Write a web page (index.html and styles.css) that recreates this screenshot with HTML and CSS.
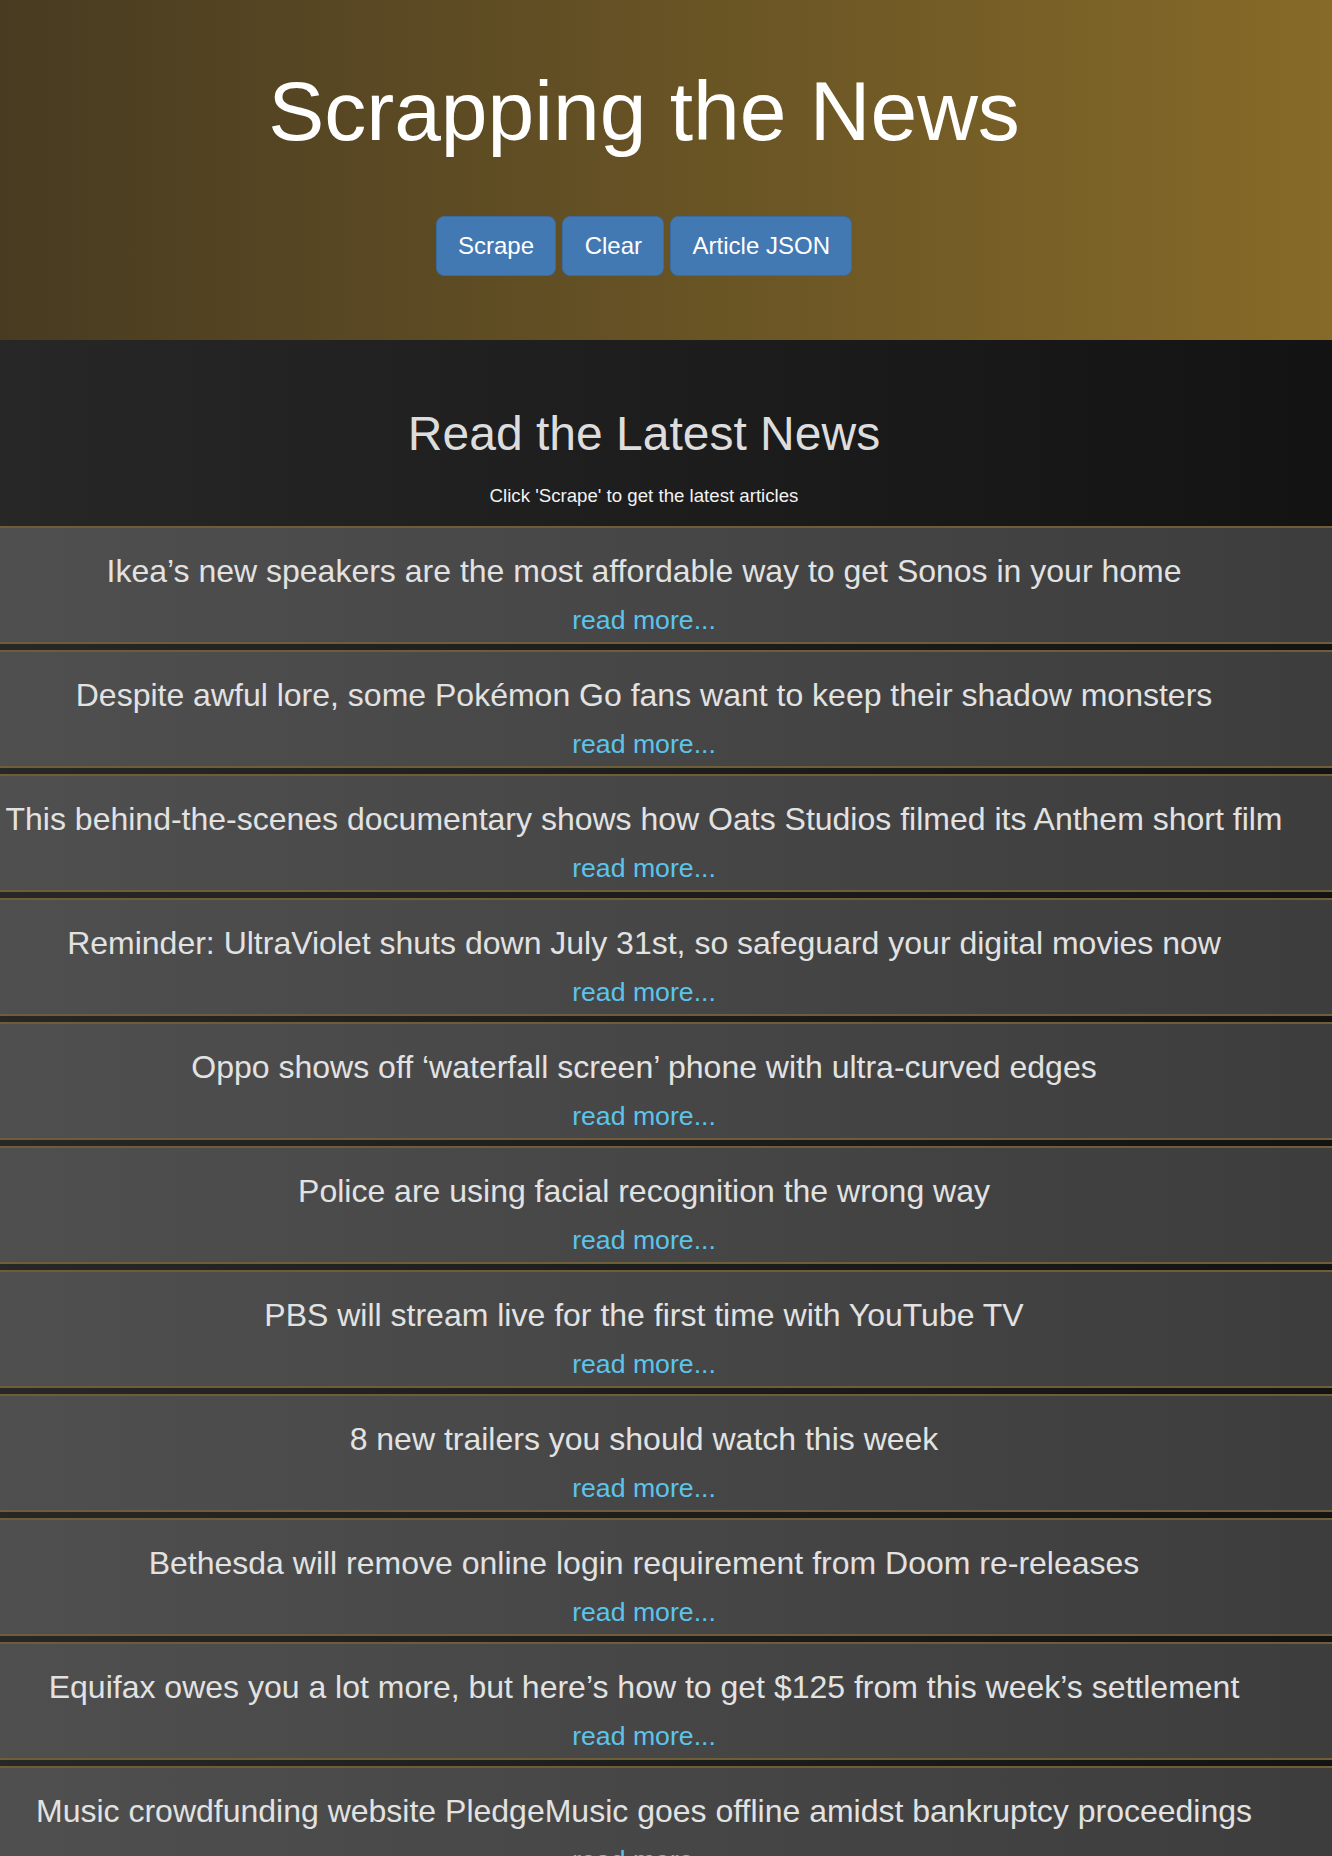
FILE: index.html
```html
<!DOCTYPE html>
<html lang="en">
<head>
<meta charset="utf-8">
<title>Scrapping the News</title>
<link rel="stylesheet" href="styles.css">
</head>
<body>
<header class="hero">
  <h1 class="hero-title">Scrapping the News</h1>
  <div class="actions">
    <button class="btn">Scrape</button>
    <button class="btn">Clear</button>
    <button class="btn">Article JSON</button>
  </div>
</header>
<main class="main">
  <section class="intro">
    <h2 class="intro-title">Read the Latest News</h2>
    <p class="intro-text">Click 'Scrape' to get the latest articles</p>
  </section>
  <div class="articles">
    <article class="article"><h3 class="article-title">Ikea’s new speakers are the most affordable way to get Sonos in your home</h3><a class="read-more" href="#">read more...</a></article>
    <article class="article"><h3 class="article-title">Despite awful lore, some Pokémon Go fans want to keep their shadow monsters</h3><a class="read-more" href="#">read more...</a></article>
    <article class="article"><h3 class="article-title">This behind-the-scenes documentary shows how Oats Studios filmed its Anthem short film</h3><a class="read-more" href="#">read more...</a></article>
    <article class="article"><h3 class="article-title">Reminder: UltraViolet shuts down July 31st, so safeguard your digital movies now</h3><a class="read-more" href="#">read more...</a></article>
    <article class="article"><h3 class="article-title">Oppo shows off ‘waterfall screen’ phone with ultra-curved edges</h3><a class="read-more" href="#">read more...</a></article>
    <article class="article"><h3 class="article-title">Police are using facial recognition the wrong way</h3><a class="read-more" href="#">read more...</a></article>
    <article class="article"><h3 class="article-title">PBS will stream live for the first time with YouTube TV</h3><a class="read-more" href="#">read more...</a></article>
    <article class="article"><h3 class="article-title">8 new trailers you should watch this week</h3><a class="read-more" href="#">read more...</a></article>
    <article class="article"><h3 class="article-title">Bethesda will remove online login requirement from Doom re-releases</h3><a class="read-more" href="#">read more...</a></article>
    <article class="article"><h3 class="article-title">Equifax owes you a lot more, but here’s how to get $125 from this week’s settlement</h3><a class="read-more" href="#">read more...</a></article>
    <article class="article"><h3 class="article-title">Music crowdfunding website PledgeMusic goes offline amidst bankruptcy proceedings</h3><a class="read-more" href="#">read more...</a></article>
  </div>
</main>
</body>
</html>
```
FILE: styles.css
```css
* { box-sizing: border-box; }

html, body {
  margin: 0;
  padding: 0;
}

body {
  font-family: "Liberation Sans", Arial, Helvetica, sans-serif;
  background: linear-gradient(to right, #272727, #131313);
  color: #e0e0e0;
}

.hero {
  height: 340px;
  padding: 65px 44px 0 0;
  background: linear-gradient(to right, #483b21, #866a28);
  text-align: center;
}

.hero-title {
  margin: 0;
  font-size: 84px;
  line-height: 92px;
  font-weight: 400;
  color: #ffffff;
}

.actions {
  margin-top: 59px;
  display: flex;
  justify-content: center;
  gap: 6px;
}

.btn {
  font-family: "Liberation Sans", Arial, Helvetica, sans-serif;
  font-size: 24px;
  line-height: 32px;
  padding: 13px 21.3px;
  color: #ffffff;
  background: #4379b2;
  border: 1px solid #3a6ca2;
  border-radius: 8px;
}

.main {
  background: linear-gradient(to right, #272727, #131313);
}

.intro {
  padding: 67px 44px 17px 0;
  text-align: center;
}

.intro-title {
  margin: 0;
  font-size: 48px;
  line-height: 53px;
  font-weight: 400;
  color: #dddddd;
}

.intro-text {
  margin: 22px 0 0;
  font-size: 18.67px;
  line-height: 27px;
  color: #f2f2f2;
}

.articles {
  display: flex;
  flex-direction: column;
  gap: 6px;
}

.article {
  padding: 26px 44px 3px 0;
  text-align: center;
  background: linear-gradient(to right, #4f4f4f, #3d3d3d);
  border-top: 2px solid #6f5d37;
  border-bottom: 2px solid #6f5d37;
}

.article-title {
  margin: 0;
  font-size: 32px;
  line-height: 35px;
  font-weight: 400;
  color: #e2e2e2;
  white-space: nowrap;
}

.read-more {
  display: block;
  margin-top: 12px;
  font-size: 26.67px;
  line-height: 38px;
  color: #5cc4ec;
  text-decoration: none;
}
```
